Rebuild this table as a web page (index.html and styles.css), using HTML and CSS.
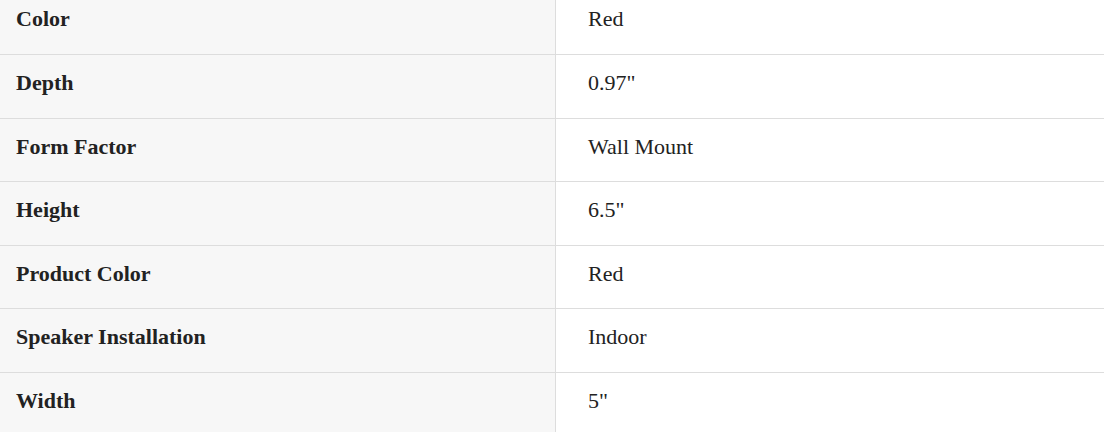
FILE: index.html
```html
<!DOCTYPE html>
<html>
<head>
<meta charset="utf-8">
<link rel="stylesheet" href="styles.css">
</head>
<body>
<div class="specs">
  <div class="label">Color</div><div class="value">Red</div>
  <div class="label">Depth</div><div class="value">0.97"</div>
  <div class="label">Form Factor</div><div class="value">Wall Mount</div>
  <div class="label">Height</div><div class="value">6.5"</div>
  <div class="label">Product Color</div><div class="value">Red</div>
  <div class="label">Speaker Installation</div><div class="value">Indoor</div>
  <div class="label">Width</div><div class="value">5"</div>
</div>
</body>
</html>
```
FILE: styles.css
```css
html, body {
  margin: 0;
  padding: 0;
  background: #fff;
}
.specs {
  width: 1104px;
  margin-top: -8.6px;
  display: grid;
  grid-template-columns: 556px 1fr;
  grid-auto-rows: 63.6px;
  font-family: "Liberation Serif", "Times New Roman", serif;
  font-size: 22px;
  line-height: 31px;
  color: #222;
}
.label,
.value {
  box-sizing: border-box;
  padding: 12px 16px 0;
  border-bottom: 1px solid #ddd;
}
.label {
  background: #f7f7f7;
  font-weight: bold;
  border-right: 1px solid #ddd;
}
.value {
  padding-left: 32px;
}
```
